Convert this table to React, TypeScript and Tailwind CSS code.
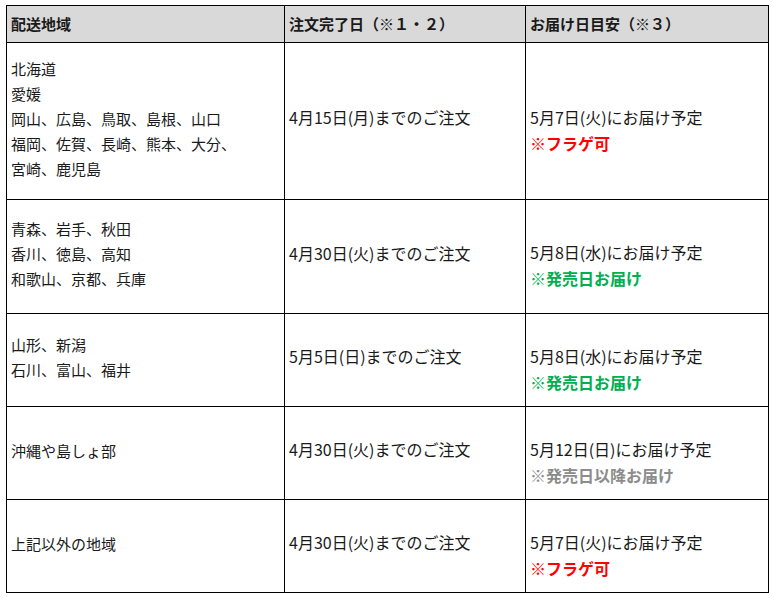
import * as React from "react";

interface Row {
  areas: string[];
  deadline: string;
  delivery: string;
  note: string;
  noteColor: string;
  height: string;
}

const rows: Row[] = [
  {
    areas: ["北海道", "愛媛", "岡山、広島、鳥取、島根、山口", "福岡、佐賀、長崎、熊本、大分、", "宮崎、鹿児島"],
    deadline: "4月15日(月)までのご注文",
    delivery: "5月7日(火)にお届け予定",
    note: "※フラゲ可",
    noteColor: "text-[#ff0000]",
    height: "h-[157px]",
  },
  {
    areas: ["青森、岩手、秋田", "香川、徳島、高知", "和歌山、京都、兵庫"],
    deadline: "4月30日(火)までのご注文",
    delivery: "5月8日(水)にお届け予定",
    note: "※発売日お届け",
    noteColor: "text-[#00b050]",
    height: "h-[114px]",
  },
  {
    areas: ["山形、新潟", "石川、富山、福井"],
    deadline: "5月5日(日)までのご注文",
    delivery: "5月8日(水)にお届け予定",
    note: "※発売日お届け",
    noteColor: "text-[#00b050]",
    height: "h-[93px]",
  },
  {
    areas: ["沖縄や島しょ部"],
    deadline: "4月30日(火)までのご注文",
    delivery: "5月12日(日)にお届け予定",
    note: "※発売日以降お届け",
    noteColor: "text-[#8c8c8c]",
    height: "h-[93px]",
  },
  {
    areas: ["上記以外の地域"],
    deadline: "4月30日(火)までのご注文",
    delivery: "5月7日(火)にお届け予定",
    note: "※フラゲ可",
    noteColor: "text-[#ff0000]",
    height: "h-[93px]",
  },
];

export default function App() {
  return (
    <div className="bg-white min-h-screen pt-[5px] pl-[6px] text-[#1a1a1a] font-['Noto_Sans_CJK_JP',sans-serif]">
      <table className="table-fixed border-collapse w-[762px]">
        <colgroup>
          <col className="w-[278px]" />
          <col className="w-[241px]" />
          <col className="w-[243px]" />
        </colgroup>
        <thead>
          <tr className="bg-[#d9d9d9] text-[15px] leading-[25px]">
            <th className="h-[37px] border border-black px-[4px] pt-0 pb-[2px] text-left font-bold align-middle">配送地域</th>
            <th className="h-[37px] border border-black px-[4px] pt-0 pb-[2px] text-left font-bold align-middle">注文完了日（※１・２）</th>
            <th className="h-[37px] border border-black px-[4px] pt-0 pb-[2px] text-left font-bold align-middle">お届け日目安（※３）</th>
          </tr>
        </thead>
        <tbody>
          {rows.map((row, i) => (
            <tr key={i}>
              {/* region list */}
              <td className={`${row.height} border border-black px-[4px] pt-0 pb-[6px] align-middle text-[15px] leading-[25px]`}>
                {row.areas.map((a) => (
                  <div key={a}>{a}</div>
                ))}
              </td>
              <td className="border border-black px-[4px] pt-0 pb-[8px] align-middle text-[16px] leading-[26px]">
                {row.deadline}
              </td>
              <td className="border border-black px-[4px] pt-0 pb-[9px] align-middle text-[16px] leading-[26px]">
                <br />
                <div>{row.delivery}</div>
                <div className={`font-bold ${row.noteColor}`}>{row.note}</div>
              </td>
            </tr>
          ))}
        </tbody>
      </table>
    </div>
  );
}
